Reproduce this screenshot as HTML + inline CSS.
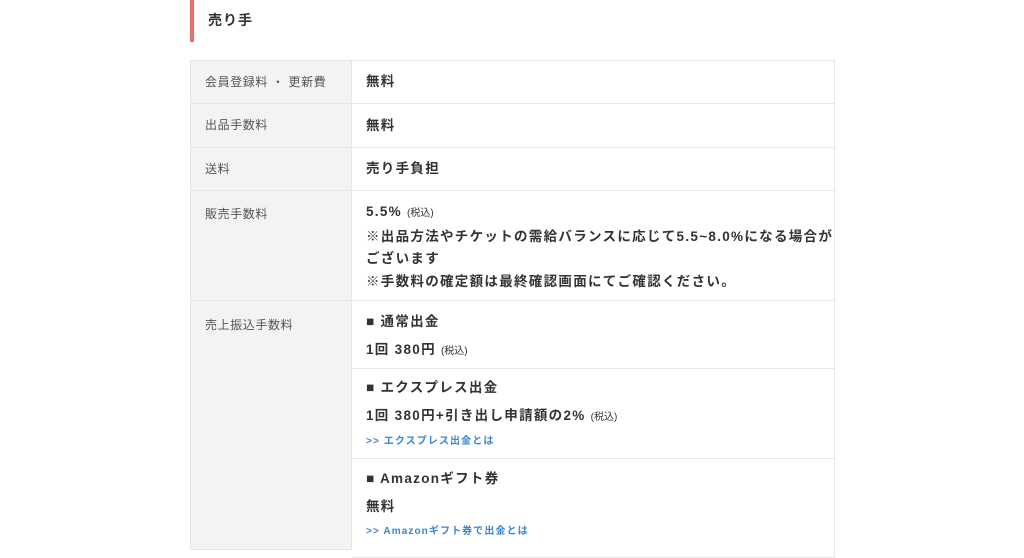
<!DOCTYPE html>
<html><head><meta charset="utf-8"><style>
body{margin:0;width:1024px;height:538px;background:#fff;overflow:hidden;position:relative;font-family:"Liberation Sans","Noto Sans CJK JP",sans-serif;color:#333}
.a{position:absolute}
.bar{left:190px;top:0;width:4px;height:42px;background:#e8706a}
.h{left:208px;top:10px;font-size:14px;font-weight:bold;color:#333;letter-spacing:1px}
.lab{background:#f3f3f3;left:190px;width:162px;border:1px solid #e6e6e6;box-sizing:border-box;font-size:12px;color:#555;padding-left:14px;letter-spacing:0.6px}
.val{left:352px;width:483px;border:1px solid #e6e6e6;border-left:none;box-sizing:border-box;font-size:13.5px;font-weight:bold;color:#333;padding-left:14px;letter-spacing:1.3px}
small{font-size:10px;font-weight:normal;letter-spacing:0}
.lk{font-size:10px;color:#3a86d0;font-weight:bold;letter-spacing:1.1px}
p{margin:0}
</style></head><body>
<div class="a bar"></div>
<div class="a h">売り手</div>

<div class="a lab" style="top:60px;height:44px;line-height:42px">会員登録料 ・ 更新費</div>
<div class="a val" style="top:60px;height:44px;line-height:42px">無料</div>
<div class="a lab" style="top:103px;height:45px;line-height:43px">出品手数料</div>
<div class="a val" style="top:103px;height:45px;line-height:43px">無料</div>
<div class="a lab" style="top:147px;height:44px;line-height:42px">送料</div>
<div class="a val" style="top:147px;height:44px;line-height:42px">売り手負担</div>
<div class="a lab" style="top:190px;height:111px;padding-top:14px">販売手数料</div>
<div class="a val" style="top:190px;height:111px;padding-top:10px;line-height:22.5px">5.5% <small>(税込)</small><br>※出品方法やチケットの需給バランスに応じて5.5~8.0%になる場合が<br>ございます<br>※手数料の確定額は最終確認画面にてご確認ください。</div>
<div class="a lab" style="top:300px;height:250px;padding-top:15px">売上振込手数料</div>
<div class="a val" style="top:300px;height:69px;padding-top:7px;line-height:28px">■ 通常出金<br>1回 380円 <small>(税込)</small></div>
<div class="a val" style="top:368px;height:91px;padding-top:5px;line-height:28px">■ エクスプレス出金<br>1回 380円+引き出し申請額の2% <small>(税込)</small><p class="lk" style="line-height:20px">&gt;&gt; エクスプレス出金とは</p></div>
<div class="a val" style="top:458px;height:100px;padding-top:6px;line-height:28px">■ Amazonギフト券<br>無料<p class="lk" style="line-height:22px">&gt;&gt; Amazonギフト券で出金とは</p></div>
</body></html>
